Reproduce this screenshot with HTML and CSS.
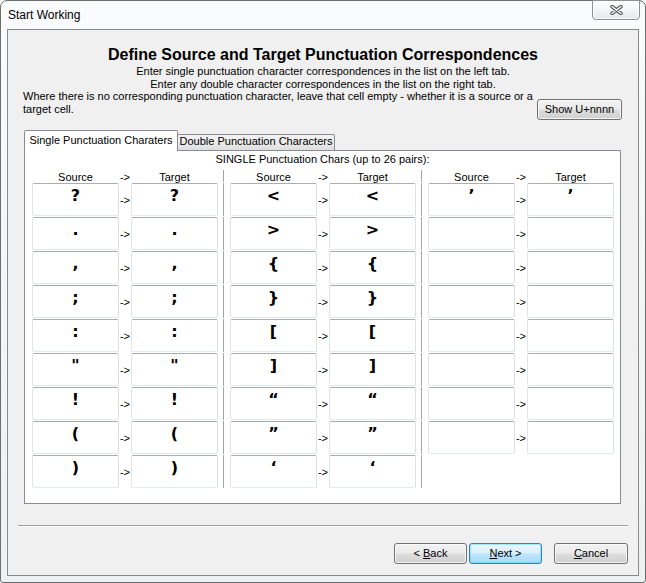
FILE: index.html
```html
<!DOCTYPE html>
<html>
<head>
<meta charset="utf-8">
<title>Start Working</title>
<link rel="stylesheet" href="styles.css">
</head>
<body>
<div class="window">
  <div class="titlebar">
    <span class="title">Start Working</span>
    <div class="close">
      <svg width="13" height="10" viewBox="0 0 13 10">
        <path d="M2 1.5 L11 8.5 M11 1.5 L2 8.5" stroke="#5a5f66" stroke-width="3.6" stroke-linecap="round" fill="none"/>
        <path d="M2 1.5 L11 8.5 M11 1.5 L2 8.5" stroke="#f2f3f5" stroke-width="1.5" stroke-linecap="round" fill="none"/>
      </svg>
    </div>
  </div>
  <div class="client">
    <div class="intro">
      <h1 class="heading">Define Source and Target Punctuation Correspondences</h1>
      <p class="line first">Enter single punctuation character correspondences in the list on the left tab.</p>
      <p class="line">Enter any double character correspondences in the list on the right tab.</p>
      <div class="intro-row">
        <p class="note">Where there is no corresponding punctuation character, leave that cell empty - whether it is a source or a<br>target cell.</p>
        <button class="btn btn-show">Show U+nnnn</button>
      </div>
    </div>
    <div class="tabs">
      <div class="tabstrip">
        <div class="tab tab-active">Single Punctuation Charaters</div>
        <div class="tab tab-inactive">Double Punctuation Characters</div>
      </div>
      <div class="panel">
        <div class="caption">SINGLE Punctuation Chars (up to 26 pairs):</div>
        <div class="groups">
          <div class="group">
            <div class="row head"><span class="hcell">Source</span><span class="harrow">-&gt;</span><span class="hcell">Target</span></div>
            <div class="row"><div class="cell">?</div><span class="arrow">-&gt;</span><div class="cell">?</div></div>
            <div class="row"><div class="cell">.</div><span class="arrow">-&gt;</span><div class="cell">.</div></div>
            <div class="row"><div class="cell">,</div><span class="arrow">-&gt;</span><div class="cell">,</div></div>
            <div class="row"><div class="cell">;</div><span class="arrow">-&gt;</span><div class="cell">;</div></div>
            <div class="row"><div class="cell">:</div><span class="arrow">-&gt;</span><div class="cell">:</div></div>
            <div class="row"><div class="cell">"</div><span class="arrow">-&gt;</span><div class="cell">"</div></div>
            <div class="row"><div class="cell">!</div><span class="arrow">-&gt;</span><div class="cell">!</div></div>
            <div class="row"><div class="cell">(</div><span class="arrow">-&gt;</span><div class="cell">(</div></div>
            <div class="row"><div class="cell">)</div><span class="arrow">-&gt;</span><div class="cell">)</div></div>
          </div>
          <div class="group divided">
            <div class="row head"><span class="hcell">Source</span><span class="harrow">-&gt;</span><span class="hcell">Target</span></div>
            <div class="row"><div class="cell">&lt;</div><span class="arrow">-&gt;</span><div class="cell">&lt;</div></div>
            <div class="row"><div class="cell">&gt;</div><span class="arrow">-&gt;</span><div class="cell">&gt;</div></div>
            <div class="row"><div class="cell">{</div><span class="arrow">-&gt;</span><div class="cell">{</div></div>
            <div class="row"><div class="cell">}</div><span class="arrow">-&gt;</span><div class="cell">}</div></div>
            <div class="row"><div class="cell">[</div><span class="arrow">-&gt;</span><div class="cell">[</div></div>
            <div class="row"><div class="cell">]</div><span class="arrow">-&gt;</span><div class="cell">]</div></div>
            <div class="row"><div class="cell">“</div><span class="arrow">-&gt;</span><div class="cell">“</div></div>
            <div class="row"><div class="cell">”</div><span class="arrow">-&gt;</span><div class="cell">”</div></div>
            <div class="row"><div class="cell">‘</div><span class="arrow">-&gt;</span><div class="cell">‘</div></div>
          </div>
          <div class="group divided">
            <div class="row head"><span class="hcell">Source</span><span class="harrow">-&gt;</span><span class="hcell">Target</span></div>
            <div class="row"><div class="cell">’</div><span class="arrow">-&gt;</span><div class="cell">’</div></div>
            <div class="row"><div class="cell"></div><span class="arrow">-&gt;</span><div class="cell"></div></div>
            <div class="row"><div class="cell"></div><span class="arrow">-&gt;</span><div class="cell"></div></div>
            <div class="row"><div class="cell"></div><span class="arrow">-&gt;</span><div class="cell"></div></div>
            <div class="row"><div class="cell"></div><span class="arrow">-&gt;</span><div class="cell"></div></div>
            <div class="row"><div class="cell"></div><span class="arrow">-&gt;</span><div class="cell"></div></div>
            <div class="row"><div class="cell"></div><span class="arrow">-&gt;</span><div class="cell"></div></div>
            <div class="row"><div class="cell"></div><span class="arrow">-&gt;</span><div class="cell"></div></div>
            <div class="row"></div>
          </div>
        </div>
      </div>
    </div>
    <div class="sep"></div>
    <div class="footer">
      <button class="btn btn-back">&lt; <u>B</u>ack</button>
      <button class="btn btn-next"><u>N</u>ext &gt;</button>
      <button class="btn btn-cancel"><u>C</u>ancel</button>
    </div>
  </div>
</div>
</body>
</html>
```
FILE: styles.css
```css
* { box-sizing: border-box; }
html, body { margin: 0; padding: 0; }
body {
  width: 646px;
  height: 583px;
  overflow: hidden;
  background: #ffffff;
  font-family: "Liberation Sans", Arial, sans-serif;
  font-size: 11px;
  color: #000;
}
.window {
  position: relative;
  width: 646px;
  height: 583px;
  border: 1px solid #6e6e6e;
  border-radius: 7px 7px 3px 3px;
  background: linear-gradient(180deg, #fafbfc 0%, #f3f4f6 60%, #eef0f2 100%);
  display: flex;
  flex-direction: column;
}
.titlebar {
  height: 28px;
  padding: 7px 0 0 7px;
  font-size: 12px;
  line-height: 14px;
  color: #000;
}
.close {
  position: absolute;
  top: -1px;
  right: 5px;
  width: 48px;
  height: 20px;
  border: 1px solid #8e8f92;
  border-radius: 0 0 4px 4px;
  background: linear-gradient(180deg, #ffffff 0%, #f4f5f6 50%, #e6e8eb 100%);
  box-shadow: inset 0 0 0 1px rgba(255,255,255,0.8);
  display: flex;
  align-items: center;
  justify-content: center;
}
.close svg { display: block; }
.client {
  flex: 1;
  margin: 0 6px 6px 6px;
  border: 1px solid #8a8a8a;
  background: #f0f0f0;
  display: flex;
  flex-direction: column;
}
.intro {
  height: 100px;
  padding-top: 16px;
}
.heading {
  margin: 0;
  font-size: 16px;
  line-height: 18px;
  font-weight: bold;
  text-align: center;
}
.line {
  margin: 0;
  line-height: 12.6px;
  text-align: center;
}
.line.first { margin-top: 1px; }
.intro-row {
  display: flex;
  justify-content: space-between;
  align-items: flex-start;
  padding: 0 16px 0 15px;
}
.note {
  margin: 0;
  line-height: 12.6px;
}
.btn {
  font-family: "Liberation Sans", Arial, sans-serif;
  font-size: 11px;
  line-height: 19px;
  height: 21px;
  padding: 0;
  margin: 0;
  color: #000;
  border: 1px solid #707070;
  border-radius: 3px;
  background: linear-gradient(180deg, #f2f2f2 0%, #ebebeb 48%, #dddddd 52%, #cfcfcf 100%);
  box-shadow: inset 0 0 0 1px rgba(252,252,252,0.85);
  text-align: center;
}
.btn u { text-decoration: underline; text-underline-offset: 1px; }
.btn-show {
  width: 85px;
  margin-top: 9px;
}
.tabs {
  margin: 0 17px 0 16px;
}
.tabstrip {
  display: flex;
  align-items: flex-end;
  height: 20px;
}
.tab {
  border: 1px solid #898c95;
  border-bottom: none;
  line-height: 13px;
  text-align: center;
  white-space: nowrap;
}
.tab-active {
  position: relative;
  z-index: 1;
  width: 154px;
  height: 21px;
  margin-bottom: -1px;
  padding-top: 3px;
  background: #ffffff;
  border-radius: 2px 2px 0 0;
}
.tab-inactive {
  width: 158px;
  height: 16px;
  margin-left: -1px;
  padding-top: 0;
  background: linear-gradient(180deg, #f3f3f3 0%, #ebebeb 50%, #dedede 100%);
  border-radius: 2px 2px 0 0;
}
.panel {
  height: 354px;
  border: 1px solid #898c95;
  background: #ffffff;
}
.caption {
  padding-top: 2px;
  line-height: 13px;
  text-align: center;
}
.groups {
  display: flex;
  margin-top: 4px;
  padding: 0 6px 0 7px;
}
.group {
  display: flex;
  flex-direction: column;
  gap: 1px;
  width: 186px;
}
.group.divided {
  width: 193px;
  margin-left: 5px;
}
.group.divided .row {
  border-left: 1px solid #a5a5a5;
  padding-left: 6px;
}
.row {
  display: flex;
  height: 33px;
}
.row.head {
  height: 12px;
  line-height: 14px;
}
.hcell {
  width: 87px;
  text-align: center;
}
.harrow {
  width: 12px;
  text-align: center;
}
.cell {
  width: 87px;
  height: 33px;
  border: 1px solid;
  border-color: #abadb3 #dbdfe6 #e3e9ef #e2e3ea;
  border-radius: 2px;
  background: #ffffff;
  font-family: "DejaVu Sans", sans-serif;
  font-weight: bold;
  font-size: 16px;
  line-height: 18px;
  padding-top: 3px;
  text-align: center;
}
.arrow {
  width: 12px;
  padding-top: 11px;
  line-height: 13px;
  text-align: center;
  white-space: nowrap;
}
.sep {
  margin: 21px 10px 0 10px;
  height: 2px;
  border-top: 1px solid #a0a0a0;
  border-bottom: 1px solid #ffffff;
}
.footer {
  display: flex;
  justify-content: flex-end;
  padding: 16px 10px 0 10px;
}
.btn-back { width: 73px; }
.btn-next {
  width: 73px;
  margin-left: 2px;
  border-color: #3c7fb1;
  background: linear-gradient(180deg, #eaf6fd 0%, #d9f0fc 48%, #bee6fd 52%, #a7d9f5 100%);
  box-shadow: inset 0 0 0 1px rgba(72,216,251,0.45);
}
.btn-cancel {
  width: 74px;
  margin-left: 12px;
}
```
